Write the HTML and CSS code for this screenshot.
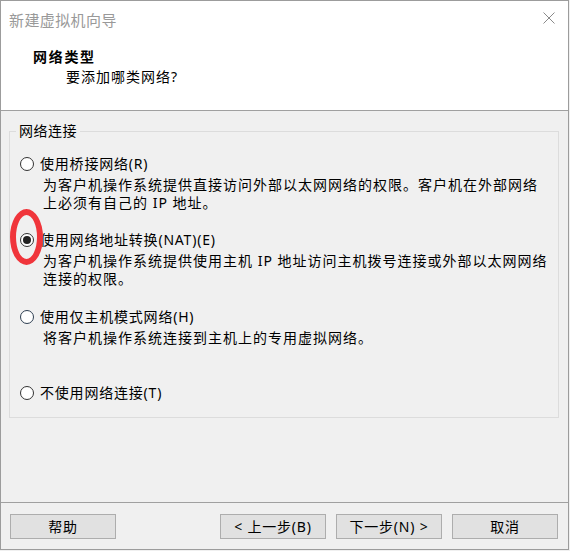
FILE: index.html
```html
<!DOCTYPE html>
<html lang="zh-CN">
<head>
<meta charset="utf-8">
<title>新建虚拟机向导</title>
<link rel="stylesheet" href="styles.css">
</head>
<body>
<div class="window">
  <div class="titlebar">
    <span class="title">新建虚拟机向导</span>
    <svg class="close" width="12" height="12" viewBox="0 0 12 12"><path d="M0.5 0.5 L11.5 11.5 M11.5 0.5 L0.5 11.5" stroke="#8a8a8a" stroke-width="1" fill="none"/></svg>
  </div>
  <div class="header">
    <div class="h-title">网络类型</div>
    <div class="h-sub">要添加哪类网络?</div>
  </div>
  <div class="content">
    <fieldset class="group">
      <legend>网络连接</legend>
      <div class="opt">
        <div class="row"><span class="radio"></span><span>使用桥接网络(R)</span></div>
        <div class="desc">为客户机操作系统提供直接访问外部以太网网络的权限。客户机在外部网络<br>上必须有自己的 IP 地址。</div>
      </div>
      <div class="opt opt2">
        <span class="mark"></span>
        <div class="row"><span class="radio checked"><span class="dot"></span></span><span>使用网络地址转换(NAT)(E)</span></div>
        <div class="desc">为客户机操作系统提供使用主机 IP 地址访问主机拨号连接或外部以太网网络<br>连接的权限。</div>
      </div>
      <div class="opt opt3">
        <div class="row"><span class="radio focus"></span><span>使用仅主机模式网络(H)</span></div>
        <div class="desc">将客户机操作系统连接到主机上的专用虚拟网络。</div>
      </div>
      <div class="opt opt4">
        <div class="row"><span class="radio"></span><span>不使用网络连接(T)</span></div>
      </div>
    </fieldset>
  </div>
  <div class="footer">
    <button class="btn">帮助</button>
    <div class="btn-group">
      <button class="btn">&lt; 上一步(B)</button>
      <button class="btn">下一步(N) &gt;</button>
      <button class="btn">取消</button>
    </div>
  </div>
</div>
</body>
</html>
```
FILE: styles.css
```css
* { box-sizing: border-box; }
html, body {
  margin: 0;
  padding: 0;
  background: #f0f0f0;
}
body {
  font-family: "Noto Sans", "Noto Sans CJK SC", sans-serif;
  font-size: 14px;
  color: #000;
}
.window {
  width: 569px;
  height: 550px;
  border: 1px solid #9c9c9c;
  display: flex;
  flex-direction: column;
  background: #f0f0f0;
}
.titlebar {
  height: 36px;
  background: #fff;
  display: flex;
  align-items: center;
  justify-content: space-between;
  padding: 0 13px 0 8px;
}
.title {
  font-size: 15px;
  letter-spacing: 0.4px;
  color: #999;
  line-height: 20px;
  margin-top: 1px;
}
.close { display: block; margin-top: -2px; }
.header {
  background: #fff;
  padding: 10px 0 23px 32px;
  border-bottom: 1px solid #a0a0a0;
}
.h-title {
  font-weight: bold;
  line-height: 20px;
  letter-spacing: 1.7px;
}
.h-sub {
  line-height: 20px;
  padding-left: 33px;
  letter-spacing: 1px;
}
.content {
  flex: 1;
  padding-top: 10px;
}
.group {
  margin: 0 9px 0 8px;
  border: 1px solid #dcdcdc;
  padding: 13px 0 14px 9px;
  min-width: 0;
}
.group legend {
  padding: 0 3px;
  margin-left: -3px;
  line-height: 20px;
  letter-spacing: 0.5px;
}
.opt { position: relative; }
.opt2 { margin-top: 18px; }
.opt3 { margin-top: 19px; }
.opt4 { margin-top: 36px; }
.row {
  height: 20px;
  display: flex;
  align-items: center;
  padding-left: 1px;
  gap: 6px;
  letter-spacing: 0.8px;
  line-height: 20px;
}
.radio {
  width: 14px;
  height: 14px;
  border: 1px solid #333;
  border-radius: 50%;
  background: #fff;
  display: flex;
  align-items: center;
  justify-content: center;
  flex: none;
}
.radio.focus { border-color: #2f3f52; }
.dot {
  width: 8px;
  height: 8px;
  border-radius: 50%;
  background: #222;
}
.desc {
  margin-top: 2px;
  padding-left: 24px;
  line-height: 18px;
  letter-spacing: 1px;
}
.mark {
  position: absolute;
  left: -9px;
  top: -21px;
  width: 33px;
  height: 56px;
  border: 6px solid #f0353b;
  border-radius: 50%;
  z-index: 2;
}
.footer {
  border-top: 1px solid #a0a0a0;
  padding: 11px 10px 10px 9px;
  display: flex;
  justify-content: space-between;
}
.btn-group {
  display: flex;
  gap: 10px;
}
.btn {
  width: 106px;
  height: 25px;
  background: #e1e1e1;
  border: 1px solid #adadad;
  font-family: "Noto Sans", "Noto Sans CJK SC", sans-serif;
  font-size: 14px;
  letter-spacing: 0.8px;
  color: #000;
  padding: 0;
  margin: 0;
  line-height: 20px;
}
```
